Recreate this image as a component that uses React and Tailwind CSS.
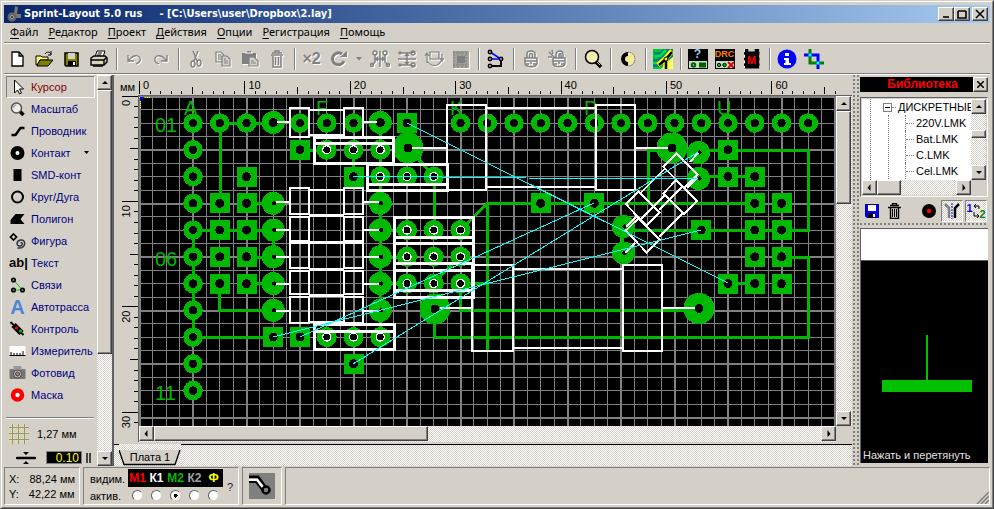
import React, { useState } from "react";

const raised = "bg-[#d4d0c8] border border-t-white border-l-white border-b-[#404040] border-r-[#404040] shadow-[inset_-1px_-1px_0_#808080]";
const track = "bg-[repeating-conic-gradient(#fff_0_25%,#d4d0c8_0_50%)] bg-[length:2px_2px]";
const dots = "bg-[radial-gradient(circle_at_1px_1px,#808080_1px,transparent_1px)] bg-[length:4px_4px]";
const sunken = "border border-t-[#808080] border-l-[#808080] border-b-white border-r-white";

/* ---------- scroll bars ---------- */
const arrows = { up: "M4 1 L7 4 H1 Z", down: "M1 1 H7 L4 4 Z", left: "M4 0 V7 L1 4 Z", right: "M2 0 V7 L5 4 Z" };
function ScrollButton({ dir }) {
  return (
    <button aria-label={dir} className={`flex size-[15px] shrink-0 items-center justify-center ${raised}`}>
      <svg width="8" height="7" viewBox={dir === "up" || dir === "down" ? "0 -1 8 7" : "0 0 7 7"}><path d={arrows[dir]} /></svg>
    </button>
  );
}

/* ---------- toolbar icons ---------- */
const G = "#808080";
const toolIcons = {
  new: <path d="M4 3 H11 L15 7 V17 H4 Z M11 3 V7 H15" fill="#fff" stroke="#000" strokeWidth="1.3" />,
  open: <><path d="M1 7 H6 L7 8 H13 V11 H5 L2 16 H1 Z" fill="#ff6" stroke="#000" /><path d="M5 11 H18 L13 17 H2 Z" fill="#808000" stroke="#000" /><path d="M10 5 C12 2 15 3 16 5 M16 2 V6 H13" fill="none" stroke="#000" /></>,
  save: <><path d="M3 4 H16 V17 H4 L3 16 Z" fill="#808000" stroke="#000" strokeWidth="1.5" /><path d="M6 4 H13 V10 H6 Z" fill="#d4d0c8" /><path d="M6 12 H14 V17 H6 Z" fill="#000" /><path d="M11 13 H13 V16 H11 Z" fill="#fff" /></>,
  print: <><path d="M6 8 L8 2 H16 L14 8 Z" fill="#fff" stroke="#000" /><path d="M9 4 H13 M8 6 H12" stroke="#000" /><path d="M2 9 L5 7 H16 L18 9 V13 L15 16 H2 Z" fill="#d4d0c8" stroke="#000" strokeWidth="1.4" /><path d="M2 11 H15 V16 M15 11 L18 8 M4 17 H14" fill="none" stroke="#000" strokeWidth="1.4" /><path d="M10 13 H13" stroke="#ff0" /></>,
  undo: <path d="M4 6 V12 H10 M4 12 L7 9 C9 7 14 5 16 9 C17 12 15 14 12 15" fill="none" stroke={G} strokeWidth="1.3" />,
  redo: <path d="M16 6 V12 H10 M16 12 L13 9 C11 7 6 5 4 9 C3 12 5 14 8 15" fill="none" stroke={G} strokeWidth="1.3" />,
  cut: <g fill="none" stroke={G} strokeWidth="1.4"><path d="M7 2 L11 12 M12 2 L8 12" /><ellipse cx="7" cy="15" rx="2" ry="3" /><ellipse cx="13" cy="14" rx="2" ry="3" /></g>,
  copy: <g fill="none" stroke={G} strokeWidth="1.2"><path d="M3 3 H8 L11 6 V13 H3 Z M5 6 H8 M5 8 H9 M5 10 H9" /><path d="M9 7 H14 L17 10 V17 H9 Z" fill="#d4d0c8" /><path d="M11 10 H13 M11 12 H15 M11 14 H15" /></g>,
  paste: <><path d="M2 4 H7 V2 H11 V4 H16 V15 H2 Z" fill={G} /><path d="M5 4 H13" stroke="#fff" /><path d="M9 8 H14 L18 12 V17 H9 Z M11 12 H14 M11 14 H16" fill="#d4d0c8" stroke={G} strokeWidth="1.2" /></>,
  trash: <g fill="none" stroke={G} strokeWidth="1.5"><path d="M4 6 H16 M5 4 H15 M8 4 V2 H12 V4 M6 7 V18 H14 V7 M8.500 8 V16 M11.500 8 V16" /></g>,
  rotate: <><path d="M15 12 A6 6 0 1 1 13 5" fill="none" stroke={G} strokeWidth="3" /><path d="M11 8 H18 V2 Z" fill={G} /></>,
  mirror: <g fill="none" stroke={G} strokeWidth="1.5"><path d="M10 2 V18 M2 16 L5 13 V5 M18 16 L15 13 V5 M6 10 H14 M8 8 L6 10 L8 12 M12 8 L14 10 L12 12" /><circle cx="5" cy="4" r="2" /><circle cx="15" cy="4" r="2" /><circle cx="2" cy="16" r="1.500" /><circle cx="18" cy="16" r="1.500" /></g>,
  flip: <g fill="none" stroke={G} strokeWidth="1.5"><path d="M1 10 H19 M4 4 H14 L17 3 M4 16 H14 L17 17 M10 5 V15 M8 7 L10 5 L12 7 M8 13 L10 15 L12 13" /><circle cx="16" cy="4" r="2" /><circle cx="16" cy="16" r="2" /><circle cx="3" cy="4" r="1" /><circle cx="3" cy="16" r="1" /></g>,
  align: <g fill="none" stroke={G} strokeWidth="1.2"><path d="M6 3 H15 V10 H6 Z M3 14 V5 M1 7 L3 4 L5 7 M3 12 C7 18 14 18 17 12 M18 5 V11 M16 9 L18 12 L20 9" /></g>,
  pattern: <><rect x="2" y="2" width="16" height="17" fill="#a5a29c" /><path d="M3 2 V19 M7 2 V19 M11 2 V19 M15 2 V19 M2 4 H18 M2 16 H18" stroke={G} strokeDasharray="2 1" /><rect x="6" y="7" width="8" height="7" fill={G} /></>,
  nodes: <><path d="M4 3 L15 10 H4" fill="none" stroke="#00f" strokeWidth="1.5" /><path d="M15 9 V17 H4" fill="none" stroke="#000" strokeWidth="2" /><circle cx="4" cy="3" r="1.700" fill="#aaa" stroke="#000" strokeWidth="1.500" /><circle cx="4" cy="10" r="1.700" fill="#aaa" stroke="#000" strokeWidth="1.500" /><circle cx="4" cy="17" r="1.700" fill="#aaa" stroke="#000" strokeWidth="1.500" /><circle cx="15" cy="10" r="1.700" fill="#aaa" stroke="#000" strokeWidth="1.500" /></>,
  lock: <g fill="none" stroke={G} strokeWidth="1.500"><path d="M6 9 V5 C6 1 14 1 14 5 V9 M8.500 9 V6 C8.500 4 11.500 4 11.500 6 V9" /><path d="M4 9 H16 V14 C16 19 4 19 4 14 Z M4 12 H9 M11 12 H16 M5 15 H8 M12 15 H15 M10 11 V15" /></g>,
  unlock: <g fill="none" stroke={G} strokeWidth="1.500"><path d="M8 9 V5 C9 1 15 1 15 5 V9 M11 9 V6 C11 4 13 4 13 6 V9" /><path d="M5 9 H17 V14 C17 19 5 19 5 14 Z M5 12 H10 M12 12 H17 M6 15 H9 M13 15 H16 M11 11 V15 M1 3 L7 9 M4 1 L5 5 M0 8 H4" /></g>,
  magnifier: <><path d="M13 13 L18 18" stroke="#000" strokeWidth="3.500" /><path d="M14 13 L17 16" stroke="#cc8" strokeWidth="1" /><circle cx="9" cy="8" r="6.500" fill="#f2edb0" stroke="#000" strokeWidth="1.500" /></>,
  contrast: <><circle cx="10" cy="10" r="7" fill="#000" /><path d="M10 3 A7 7 0 0 1 10 17 V13 A3 3 0 0 1 10 7 Z" fill="#f4ec9a" /><path d="M10 3 A7 7 0 0 1 10 17" fill="none" stroke="#777" strokeDasharray="1 1" /></>,
  board: <><rect x="0" y="0" width="10" height="20" fill="#00c832" /><path d="M0 3 H7 L10 0 H20 V8 L8 18 H0 V10 H5" fill="#008080" /><path d="M2 7 H7 L13 1 M0 14 H5" fill="none" stroke="#00e040" strokeWidth="2.500" /><path d="M8 20 L20 8 V20 Z" fill="#ff6" /><path d="M19 2 L12 10 L5 16 M13 10 V20" fill="none" stroke="#ff0" strokeWidth="5" /><path d="M19 3 L13 10 L6 16 M13 10 V20" fill="none" stroke="#000" strokeWidth="2.500" /><circle cx="13" cy="10" r="2" fill="#ff0" stroke="#000" /></>,
  info: <><circle cx="10" cy="10" r="9.500" fill="#00f" /><path d="M8 4 H12 V7 H8 Z M7 9 H12 V14 H14 V16 H7 V14 H8.500 V11 H7 Z" fill="#fff" /></>,
  crop: <g fill="none"><path d="M6 0 V14 H20" stroke="#008000" strokeWidth="3" /><path d="M0 6 H14 V20" stroke="#00f" strokeWidth="3" /><path d="M4.500 4.500 H7.500 V7.500 H4.500 Z M12.500 12.500 H15.500 V15.500 H12.500 Z" fill="#0ff" /></g>,
};
const toolGroups = [
  ["new", "open", "save", "print"],
  ["-undo", "-redo"],
  ["-cut", "-copy", "-paste", "-trash"],
  ["x2", "-rotate", "caret", "-mirror", "-flip", "-align", "-pattern"],
  ["nodes"],
  ["-lock", "-unlock"],
  ["magnifier"],
  ["contrast"],
  ["board"],
  ["help", "drc", "mask"],
  ["info", "crop"],
];

function ToolIcon({ name }) {
  if (name === "x2") return <span className="text-[16px] font-bold text-[#808080] [text-shadow:1px_1px_0_#fff]">×2</span>;
  if (name === "help")
    return (
      <span className="flex h-5 w-5 flex-col bg-black text-center text-[12px] leading-[11px] font-bold text-[#a6caf0]">
        ?<svg className="mt-auto border border-black bg-[#c0e0c0]" width="20" height="9"><circle cx="4.500" cy="4" r="1.700" fill="none" stroke="#006000" strokeWidth="2" /><rect x="10" y="1.500" width="7" height="5" fill="#006000" /></svg>
      </span>
    );
  if (name === "drc")
    return (
      <span className="flex h-5 w-5 flex-col bg-black text-center text-[9px] leading-[11px] font-bold text-[#ff8000]">
        DRC<svg className="mt-auto border border-black bg-[#c0e0c0]" width="20" height="9"><circle cx="3" cy="4" r="1.700" fill="#00c000" stroke="#000" /><circle cx="8.500" cy="4" r="1.700" fill="#00c000" stroke="#000" /><path d="M12 1 L18 7 M18 1 L12 7" stroke="#e00000" strokeWidth="2" /></svg>
      </span>
    );
  if (name === "mask")
    return <span className="h-5 w-4 border-x border-dashed border-white bg-black pt-1 text-center text-[11px] leading-[15px] font-bold text-[#ff0000] [clip-path:polygon(0_0,30%_0,30%_15%,70%_15%,70%_0,100%_0,100%_100%,0_100%)]">M</span>;
  return <svg width="20" height="20" viewBox="0 0 20 20">{toolIcons[name]}</svg>;
}

function Toolbar() {
  return (
    <div className="flex h-[31px] shrink-0 items-center border-t border-b border-t-white border-b-[#808080]">
      {toolGroups.map((group, g) => (
        <div key={g} className="flex items-center">
          {g > 0 && <div className="mr-[3px] ml-1 h-[22px] w-px border-l border-l-[#808080] shadow-[1px_0_0_#fff]" />}
          {group.map((raw) => {
            const off = raw[0] === "-";
            const name = off ? raw.slice(1) : raw;
            if (name === "caret")
              return <button key={raw} aria-label="rotate options" className="flex w-[14px] justify-center"><svg width="6" height="4"><path d="M0 0 H6 L3 3.500 Z" fill={G} /></svg></button>;
            return (
              <button key={raw} aria-label={name} className={`flex h-7 w-[27px] items-center justify-center ${off ? "drop-shadow-[1px_1px_0_#fff]" : ""}`}>
                <ToolIcon name={name} />
              </button>
            );
          })}
        </div>
      ))}
    </div>
  );
}

/* ---------- side tools ---------- */
const sideTools = [
  ["Курсор", <path d="M5 1 V14 L8 11 L10 15 L12 14 L10 10 H14 Z" fill="#fff" stroke="#000" />],
  ["Масштаб", <><path d="M10 10 L14 14" stroke="#000" strokeWidth="3.500" /><circle cx="7" cy="7" r="5" fill="#eee" stroke="#555" strokeWidth="1.500" /><path d="M4 7 A3 3 0 0 1 7 4" fill="none" stroke="#aaa" strokeWidth="1.500" /></>],
  ["Проводник", <path d="M2 12 H6 L11 5 H15" fill="none" stroke="#000" strokeWidth="2.500" />],
  ["Контакт", <circle cx="8" cy="8" r="4.500" fill="#fff" stroke="#000" strokeWidth="5" />],
  ["SMD-конт", <rect x="4" y="2" width="8" height="12" />],
  ["Круг/Дуга", <circle cx="8" cy="8" r="5.500" fill="none" stroke="#000" strokeWidth="2" />],
  ["Полигон", <path d="M1 13 V9 L6 3 H15 L11 8 L15 13 Z" />],
  ["Фигура", <><path d="M4 1 L7 4 L4 7 L1 4 Z" fill="none" stroke="#000" strokeWidth="1.700" /><path d="M8 15 C17 16 17 6 11 7 C6 8 7 14 11 13 C14 12 13 9 11 10" fill="none" stroke="#334" strokeWidth="1.500" /></>],
  ["Текст", null],
  ["Связи", <><path d="M13 13 H4 M4 3 L13 13" fill="none" stroke="#0c0" /><circle cx="4" cy="3" r="1.800" stroke="#000" strokeWidth="1.500" fill="#777" /><circle cx="4" cy="13" r="1.800" stroke="#000" strokeWidth="1.500" fill="#777" /><circle cx="13" cy="13" r="1.800" stroke="#000" strokeWidth="1.500" fill="#777" /></>],
  ["Автотрасса", null],
  ["Контроль", <><path d="M1 1 L14 14" stroke="#000" strokeWidth="2" /><path d="M4 4 L12 12" stroke="#000" strokeWidth="6" /><circle cx="7" cy="7" r="1.500" fill="red" /><circle cx="11" cy="10" r="1.500" fill="#0c0" /></>],
  ["Измеритель", <><rect x="0" y="3" width="16" height="10" fill="#fff" /><path d="M0 12.500 H16 M1.500 9 V13 M4.500 10 V13 M7.500 10 V13 M10.500 10 V13 M13.500 8 V13" stroke="#000" /></>],
  ["Фотовид", <><rect x="0" y="4" width="16" height="10" rx="1" fill="#777" /><rect x="4" y="1" width="8" height="4" fill="#999" /><circle cx="8" cy="9" r="4" fill="#ccc" stroke="#444" /><circle cx="8" cy="9" r="2" fill="#b8845a" stroke="#334" /></>],
  ["Маска", <><circle cx="8" cy="8" r="4.500" fill="#fff" stroke="#f00" strokeWidth="4.500" /></>],
];

function SideTools() {
  return (
    <aside className="flex w-[108px] shrink-0 border-r-2 border-r-[#606060]">
      <div className="min-w-0 flex-1 overflow-hidden pt-px">
        {sideTools.map(([label, icon], i) => (
          <button key={label} className={`flex h-[22px] w-[89px] items-center gap-[5px] border pl-0.5 text-left text-[11px] whitespace-nowrap ${i === 0 ? "border-t-[#808080] border-l-[#808080] border-r-white border-b-white text-[#800000]" : "border-transparent text-[#000080]"}`}>
            {label === "Текст" ? <span className="w-[17px] text-[13px] font-bold text-black">ab|</span>
              : label === "Автотрасса" ? <span className="w-[17px] text-center text-[20px] leading-4 font-bold text-[#4a86d8]">A</span>
              : <svg className="shrink-0" width="17" height="16" viewBox="0 0 16 16">{icon}</svg>}
            <span>{label}</span>
            {label === "Контакт" && <svg className="ml-2" width="6" height="4"><path d="M0 0 H5 L2.500 3 Z" /></svg>}
          </button>
        ))}
        <div className="mt-[11px] mr-[3px] border-t border-t-[#808080] shadow-[0_1px_0_#fff]" />
        <div className="mt-1.5 flex h-5 items-center gap-2 pl-[3px] text-[11px]">
          <svg width="20" height="20"><path d="M3.500 0 V20 M9.500 0 V20 M15.500 0 V20 M0 3.500 H20 M0 9.500 H20 M0 15.500 H20" stroke="#eded70" strokeWidth="3" strokeDasharray="1 1" /><path d="M3.500 0 V20 M9.500 0 V20 M15.500 0 V20 M0 3.500 H20 M0 9.500 H20 M0 15.500 H20" stroke="#909090" /></svg>
          1,27 мм
        </div>
        <div className="mt-[7px] flex h-[13px] items-start pl-2.5">
          <svg width="20" height="13"><path d="M1 7 H19" stroke="#000" strokeWidth="2.500" strokeLinecap="round" /><path d="M7 1 H13 L10 4 Z M10 10 L13 13 H7 Z" /></svg>
          <input aria-label="track width" defaultValue="0.10" className="ml-2.5 h-[13px] w-9 border border-[#808080] bg-black pr-0.5 text-right text-[12px] leading-[11px] text-[#ffff00]" />
          <svg className="ml-1" width="6" height="13"><path d="M1 2 V12 M4 2 V12" stroke="#444" strokeWidth="2" /></svg>
        </div>
      </div>
      <div className={`flex w-[15px] flex-col ${track}`}>
        <ScrollButton dir="up" />
        <div className={`h-[264px] ${raised}`} />
        <div className="flex-1" />
        <ScrollButton dir="down" />
      </div>
    </aside>
  );
}

/* ---------- rulers ---------- */
const MM = 10.54;
const mmTicks = (n) => Array.from({ length: n + 1 }, (_, i) => i);
function TopRuler() {
  return (
    <svg className="h-5 min-w-0 flex-1 overflow-hidden" shapeRendering="crispEdges">
      {mmTicks(66).map((i) => {
        const x = 0.5 + i * MM, y = i % 10 === 0 ? 6 : i % 5 === 0 ? 12 : 16;
        return <path key={i} d={`M${x} ${y} V19`} stroke="#000" />;
      })}
      {mmTicks(66).filter((i) => i % 10 === 0).map((i) => <text key={i} x={4 + i * MM} y="14" fontSize="11">{i}</text>)}
    </svg>
  );
}
function LeftRuler() {
  return (
    <svg className="h-full w-6 shrink-0 overflow-hidden" shapeRendering="crispEdges">
      {mmTicks(31).map((i) => {
        const y = 1 + i * MM, x = i % 10 === 0 ? 8 : i % 5 === 0 ? 16 : 20;
        return <path key={i} d={`M${x} ${y} H24`} stroke="#000" />;
      })}
      {mmTicks(31).filter((i) => i % 10 === 0).map((i) => (
        <text key={i} transform={`translate(16 ${3 + i * MM + (i ? 14 : 8)}) rotate(-90)`} fontSize="11">{i}</text>
      ))}
    </svg>
  );
}

/* ---------- circuit board ---------- */
const P = 26.75;
const cx = (c) => 139.5 + P * c;
const cy = (r) => 96.3 + P * r;
const GREEN = "#00b800";
const range = (a, b) => Array.from({ length: b - a + 1 }, (_, i) => a + i);

const ringPads = [...range(1, 11).map((r) => [2, r]), ...[3, 4, 6, 7, 8].map((c) => [c, 1]), ...range(12, 25).map((c) => [c, 1])];
const squarePads = [[10, 1], [6, 2], [4, 3], [8, 3], [3, 4], [4, 4], [3, 5], [4, 5], [3, 6], [4, 6], [3, 7], [4, 7], [5, 9], [6, 9], [8, 10], [15, 4], [17, 4], [22, 2], [22, 3], [23, 3], [23, 4], [24, 4], [21, 5], [23, 5], [24, 5], [23, 6], [24, 6], [22, 7], [23, 7], [24, 7]];
const headerPads = [[7, 2], [8, 2], [9, 2], [9, 3], [10, 3], [11, 3], ...[5, 6, 7].flatMap((r) => [[10, r], [11, r], [12, r]]), [7, 9], [8, 9], [9, 9]];
const resistorPads = [...range(4, 8).flatMap((r) => [[cx(5), cy(r)], [cx(9), cy(r)]]), [698.5, 152.5], [698.5, 178.5], [623.5, 226.5], [623.5, 253]];
const bigPads = [[408, 148], [672, 148], [435, 309], [699, 308.5]];
const traces = [
  "M220 123 H273 M220 123 V203 M246 203.500 H273 M193 230.500 H273 M246 257.500 H273 M246 283.500 H273",
  "M219.500 283 V310.500 H273 M193.500 230 V337.500 H273 M273.500 230 V257 M380.500 123 V337 M300 150 H326 M353.500 150 V176",
  "M434.500 176 V230 M408 148 L434 176 M460 230 L487.500 203.500 H755 M487.500 203 V350 M380 230.500 H407 M380 257.500 H407 M380 283.500 H407",
  "M460 257 L433 283 M460 283.500 H487 M460.500 283 V310.500 H699 M434.500 309 V337.500 H808.500 V257.500 H782",
  "M698 150.500 H808.500 V230.500 H624 M648.500 203 V150.500 H672 M698 176.500 H755 M674 123 V148 M728 283.500 H755 M622 227 V253",
];
const resistorRows = [[188, 214], [217, 241], [243, 268], [271, 294], [297, 323]];
const diagonal = "M676.300 153.300 L697.300 174.300 L684 187.700 L663.300 166.700 Z M638.300 191.700 L659.300 212.700 L646.700 225.700 L625.700 204 Z M665 168.500 L640 193.500 M683 186 L659 210";
const labels = [["A", 184, 115], ["F", 316, 115], ["K", 450, 115], ["P", 584, 115], ["U", 717, 115], ["01", 155, 132], ["06", 155, 266], ["11", 155, 400]];

function Board() {
  return (
    <svg className="block min-h-0 min-w-0 flex-1 bg-black" shapeRendering="crispEdges">
      <g transform="translate(-139 -96)">
        {range(0, 150).map((i) => <path key={`v${i}`} d={`M${139.5 + (P / 2) * i} 96 V1600`} stroke={G} strokeWidth={i % 4 === 0 ? 2 : 1} />)}
        {range(0, 110).map((i) => <path key={`h${i}`} d={`M139 ${96.5 + (P / 2) * i} H2200`} stroke={G} strokeWidth={i % 4 === 0 ? 2 : 1} />)}
        {labels.map(([t, x, y]) => <text key={t} x={x} y={y} fontSize="20" fill={GREEN} fontFamily="Liberation Sans, sans-serif">{t}</text>)}
        <path d={traces.join(" ")} fill="none" stroke={GREEN} strokeWidth="3" />
        {ringPads.map(([c, r]) => <circle key={`${c}-${r}`} cx={cx(c)} cy={cy(r)} r="7" fill="#000" stroke={GREEN} strokeWidth="5.500" />)}
        {[5, 9].map((c) => <circle key={c} cx={cx(c)} cy="122.500" r="8" fill="#000" stroke={GREEN} strokeWidth="7" />)}
        {squarePads.map(([c, r]) => (
          <g key={`${c}-${r}`}><rect x={Math.round(cx(c)) - 10} y={Math.round(cy(r)) - 10} width="20" height="20" fill={GREEN} /><circle cx={cx(c)} cy={cy(r)} r="4.500" /></g>
        ))}
        {resistorPads.map(([x, y]) => <g key={`${x}-${y}`}><circle cx={x} cy={y} r="11.500" fill={GREEN} /><circle cx={x + 1} cy={y} r="2.200" /></g>)}
        {bigPads.map(([x, y]) => <g key={x}><circle cx={x} cy={y} r="15.500" fill={GREEN} /><circle cx={x} cy={y} r="4.500" /></g>)}
        {headerPads.map(([c, r]) => (
          <g key={`${c}-${r}`}><circle cx={cx(c)} cy={cy(r)} r="10" fill={GREEN} /><circle cx={cx(c)} cy={cy(r)} r="4" stroke="#fff" strokeWidth="1.300" /></g>
        ))}
        <g fill="none" stroke="#fff" strokeWidth="2">
          <path d="M290 108 H309 V137 H290 Z M344 108 H363 V137 H344 Z M309 110 H344 M309 135 H344 M277 122 H290 M363 122 H377" />
          {resistorRows.map(([a, b]) => <path key={a} d={`M290 ${a} H309 V${b} H290 Z M344 ${a} H363 V${b} H344 Z M276 ${(a + b) / 2 + 1} H290 M363 ${(a + b) / 2 + 1} H379`} />)}
          <path d="M309 190 H344 M309 322 H344" />
          <path d="M309 215.500 H344 M309 242.500 H344 M309 269.500 H344 M309 295.500 H344" strokeWidth="3" />
          <path d="M314 137.500 H393 V163.500 H314 Z M367 164.500 H447 V190.500 H367 Z M394 217.500 H473 V297.500 H394 Z M314 324.500 H394 V349.500 H314 Z M314 143.500 H393 M367 184 H447 M394 237 H473 M394 243.500 H473 M394 263.500 H473 M394 270.500 H473 M394 290.500 H473 M314 331 H394" strokeWidth="3" />
          <path d="M447 105 H486 V190 H447 Z M596 105 H635 V190 H596 Z M486 108 H596 M486 187 H596 M412 148 H447 M636 148 H668" />
          <path d="M472 265 H513 V351 H472 Z M623 265 H662 V351 H623 Z M513 269 H623 M513 348 H623 M440 308 H472 M663 308 H695" />
          <path d={diagonal} />
          <path d={diagonal} transform="translate(0 26.700)" />
          <path d="M690 162 L698 153 M687 188 L697 178 M626 227 L636 217 M625 253 L635 243" />
        </g>
        <path d="M407 123 L728 283 M353 176.500 H400 L526 178 L698 179 M273 337 L701 230 M300 337 L594 203 M353 364 L698 152" fill="none" stroke="#00ffff" />
        <path d="M139 97.500 H151 M140.500 97 V109" stroke="#ff0" strokeDasharray="1 1" />
        <path d="M140 97 H144 L140 101 Z" fill="#00f" />
      </g>
    </svg>
  );
}

function Workspace() {
  return (
    <main className="flex min-w-0 flex-1 flex-col">
      <div className="flex h-5 shrink-0">
        <div className="w-[25px] shrink-0 pt-1 pl-1.5 text-[11px] leading-4">мм</div>
        <TopRuler />
      </div>
      <div className="flex min-h-0 flex-1">
        <LeftRuler />
        <div className="flex min-w-0 flex-1 flex-col border-t border-l border-[#606060]">
          <div className="flex min-h-0 flex-1">
            <Board />
            <div className={`flex w-4 shrink-0 flex-col ${track}`}>
              <ScrollButton dir="up" />
              <div className={`h-[93px] w-[15px] ${raised}`} />
              <div className="flex-1" />
              <ScrollButton dir="down" />
            </div>
          </div>
          <div className="flex h-4 shrink-0">
            <div className={`flex min-w-0 flex-1 ${track}`}>
              <ScrollButton dir="left" />
              <div className={`h-[15px] w-[274px] ${raised}`} />
              <div className="flex-1" />
              <ScrollButton dir="right" />
            </div>
            <div className="w-4" />
          </div>
        </div>
      </div>
      <div className="mt-0.5 flex h-[22px] shrink-0 items-start">
        <div className={`h-full w-[5px] border-t border-black ${track}`} />
        <div className={`h-full ${track}`}>
          <button className="relative h-[15px] w-[62px] text-[11px] leading-[15px]">
            <svg className="absolute inset-0" width="62" height="16"><path d="M0 0 L5 14.500 H56 L61 0" fill="#d4d0c8" stroke="#000" strokeWidth="1.300" /></svg>
            <span className="relative">Плата 1</span>
          </button>
        </div>
        <div className={`h-full flex-1 border-t border-black ${track}`} />
      </div>
    </main>
  );
}

/* ---------- library panel ---------- */
const parts = ["220V.LMK", "Bat.LMK", "C.LMK", "Cel.LMK"];
function Library() {
  return (
    <aside className="flex w-[130px] shrink-0 flex-col pr-0.5 pb-[3px]">
      <div className="mt-0.5 flex h-[15px] shrink-0 bg-black">
        <h2 className="flex-1 pl-3 text-center text-[12px] leading-[15px] font-bold text-[#ff0000]">Библиотека</h2>
        <button aria-label="close" className={`flex w-[15px] items-center justify-center ${raised}`}><svg width="7" height="7"><path d="M0 0 L7 7 M7 0 L0 7" stroke="#000" strokeWidth="1.500" /></svg></button>
      </div>
      <div className="mt-[5px] h-[100px] shrink-0 border border-t-[#606060] border-l-[#606060] border-r-white border-b-white p-px">
        <div className="flex h-[81px]">
          <div className="min-w-0 flex-1 overflow-hidden bg-white pl-2 text-[11px] leading-4 whitespace-nowrap">
            <div className="h-full border-l border-dotted border-[#808080] pl-[17px]">
              <div className="-ml-[5px] flex h-4 items-center">
                <button aria-label="collapse" className="flex size-[9px] shrink-0 items-center justify-center border border-[#808080]"><span className="h-px w-[5px] bg-black" /></button>
                <span className="mr-0.5 w-1 shrink-0 border-t border-dotted border-[#808080]" />ДИСКРЕТНЫЕ
              </div>
              <div className="h-20 border-l border-dotted border-[#808080] pl-4">
                {parts.map((p) => (
                  <div key={p} className="flex h-4 items-center gap-0.5 border-l border-dotted border-[#808080]">
                    <span className="w-2 border-t border-dotted border-[#808080]" />{p}
                  </div>
                ))}
              </div>
            </div>
          </div>
          <div className={`flex w-[15px] flex-col ${track}`}>
            <ScrollButton dir="up" />
            <div className="flex-1" />
            <div className={`h-2 ${raised}`} />
            <div className="h-[27px]" />
            <ScrollButton dir="down" />
          </div>
        </div>
        <div className="flex h-[15px]">
          <div className={`flex flex-1 ${track}`}>
            <ScrollButton dir="left" /><div className={`w-6 ${raised}`} /><div className="flex-1" /><ScrollButton dir="right" />
          </div>
          <div className="w-[15px]" />
        </div>
      </div>
      <div className="mt-0.5 flex h-[23px] shrink-0 items-center">
        <button aria-label="save part" className="ml-[5px]"><svg width="14" height="14"><path d="M0 0 H14 V14 H2 L0 12 Z" fill="#00f" /><path d="M0.500 0.500 H13.500 V13.500 H2 L0.500 12 Z" fill="none" stroke="#000080" /><path d="M3 1 H11 V7 H3 Z M8 10 H10 V13 H8 Z" fill="#fff" /><path d="M3 9 H8 V14 H3 Z" fill="#000" /></svg></button>
        <button aria-label="delete part" className="ml-2"><svg width="15" height="16" fill="none" stroke="#000"><path d="M1 4.500 H14 M3 2.500 H12 M5.500 2 V0.500 H9.500 V2 M3.500 5 V15.500 H11.500 V5" fill="#d4d0c8" strokeWidth="1.400" /><path d="M5.500 6 V14 M7.500 6 V14 M9.500 6 V14" /></svg></button>
        <button aria-label="record" className="ml-5"><svg width="14" height="14"><circle cx="7" cy="7" r="7" /><circle cx="7" cy="7" r="2.200" fill="red" /></svg></button>
        <button aria-label="mirror part" className={`ml-[5px] flex h-[22px] w-[22px] items-center justify-center ${sunken} ${track}`}><svg width="16" height="16" fill="none" strokeWidth="2.500"><path d="M1 1 L5 5 V15" stroke="#808080" /><path d="M15 1 L11 5 V15" stroke="#000" /><path d="M8 0 V16" stroke="#00f" strokeWidth="1" strokeDasharray="2 1" /></svg></button>
        <button aria-label="swap sides" className={`ml-0.5 flex h-[22px] w-[22px] items-center justify-center text-[11px] leading-3 font-bold ${sunken} ${track}`}>
          <span className="mb-1.5 text-[#0000ff]">1</span><svg width="7" height="16" fill="none" stroke="#000"><path d="M6 6 V3 H1 M3 1 L1 3 L3 5 M1 9 V13 H6 M4 11 L6 13 L4 15" /></svg><span className="mt-1.5 text-[#008000]">2</span>
        </button>
      </div>
      <div className={`my-px h-1 shrink-0 ${dots}`} />
      <div className="h-8 shrink-0 border-t border-l border-[#606060] bg-white" />
      <div className="flex min-h-0 flex-1 flex-col border-t border-l border-[#606060] bg-black">
        <div className="flex flex-1 flex-col items-center justify-end pb-[60px] pl-1">
          <svg width="90" height="58" shapeRendering="crispEdges"><path d="M44 0 H46 V45 H90 V57 H0 V45 H44 Z" fill="#00c000" /></svg>
        </div>
        <p className="-mt-1 h-3.5 pl-0.5 text-[11px] leading-[12px] whitespace-nowrap text-[#e0e0e0]">Нажать и перетянуть</p>
      </div>
    </aside>
  );
}

/* ---------- status bar ---------- */
const layers = [["М1", "text-[#ff0000]"], ["К1", "text-white"], ["М2", "text-[#00b800]"], ["К2", "text-[#a0a0a0]"], ["Ф", "text-[#ffff00]"]];
function StatusBar() {
  const [active, setActive] = useState("М2");
  return (
    <footer className="mt-px flex h-[38px] shrink-0 gap-[3px] text-[11px]">
      <div className={`w-[76px] pt-1 pl-1 leading-[15px] ${sunken}`}>
        <div className="flex gap-2.5"><span>X:</span>88,24 мм</div>
        <div className="flex gap-2.5"><span>Y:</span>42,22 мм</div>
      </div>
      <div className={`flex w-[156px] items-start pt-px ${sunken}`}>
        <div className="w-[44px] pt-0.5 pl-1.5 leading-[17px]"><div>видим.</div><div>актив.</div></div>
        <div className="flex bg-[linear-gradient(#000_0_18px,transparent_18px)]">
          {layers.map(([name, color]) => (
            <div key={name} className="flex w-[19px] flex-col items-center">
              <label htmlFor={name} className={`h-[18px] text-[12px] leading-[18px] font-bold ${color}`}>{name}</label>
              <input id={name} type="radio" name="layer" checked={active === name} onChange={() => setActive(name)}
                className="mt-[3px] size-[11px] appearance-none rounded-full border border-t-[#606060] border-l-[#606060] border-r-[#d4d0c8] border-b-[#d4d0c8] bg-white checked:bg-[radial-gradient(circle,#000_2px,#fff_2px)]" />
            </div>
          ))}
        </div>
        <button className="mt-2.5 ml-1 text-[#202040]">?</button>
      </div>
      <div className={`flex w-[40px] items-center justify-center ${sunken}`}>
        <button aria-label="track mode"><svg width="26" height="26"><rect width="26" height="26" fill={G} /><path d="M0 4 H9 L17 15" fill="none" stroke="#000" strokeWidth="3" /><path d="M0 7 H8 L15 16" fill="none" stroke="#fff" strokeWidth="3" /><path d="M0 9 H7 L14 18" fill="none" stroke="#000" strokeWidth="2" /><circle cx="17" cy="17" r="3.500" fill={G} stroke="#000" strokeWidth="2.500" /></svg></button>
      </div>
      <div className={`flex flex-1 items-end justify-end ${sunken}`}>
        <svg width="13" height="13"><path d="M1 13 L13 1 M5 13 L13 5 M9 13 L13 9" stroke="#808080" strokeWidth="1.500" /></svg>
      </div>
    </footer>
  );
}

const menu = ["Файл", "Редактор", "Проект", "Действия", "Опции", "Регистрация", "Помощь"];
const caption = [["minimize", "M2 8 H8", ""], ["maximize", "M1 2 H9 M1 2 V9 H9 V2", ""], ["close window", "M1 1 L9 9 M9 1 L1 9", "ml-0.5"]];

export default function App() {
  return (
    <div className="flex h-screen flex-col overflow-hidden border border-t-[#d4d0c8] border-l-[#d4d0c8] border-r-[#404040] border-b-[#404040] bg-[#d4d0c8] font-['Liberation_Sans',Arial,sans-serif] text-black">
      <div className="flex min-h-0 flex-1 flex-col border border-t-white border-l-white border-r-[#808080] border-b-[#808080] px-0.5 pt-[3px] pb-0.5">
        <header className="flex h-[18px] shrink-0 items-center bg-linear-to-r from-[#0a246a] to-[#a6caf0] pr-0.5 pl-[3px] text-white">
          <svg width="15" height="16"><path d="M8 0 L11 1 L10 8 L7 8 Z M8 8 H14 V12 H8 Z" fill="#777" /><circle cx="5" cy="11" r="4.500" fill="#666" /><circle cx="5" cy="11" r="1.500" fill="#222" stroke="#aaa" /></svg>
          <h1 className="ml-0.5 flex-1 font-['DejaVu_Sans_Condensed','Noto_Sans',sans-serif] text-[11px] leading-[18px] font-bold whitespace-pre">Sprint-Layout 5.0 rus     - [C:\Users\user\Dropbox\2.lay]</h1>
          {caption.map(([name, d, gap]) => (
            <button key={name} aria-label={name} className={`flex h-[14px] w-4 items-center justify-center ${raised} ${gap}`}><svg width="10" height="10"><path d={d} fill="none" stroke="#000" strokeWidth="1.600" /></svg></button>
          ))}
        </header>
        <nav className="flex h-5 shrink-0 items-center gap-2.5 border-b border-b-[#808080] pl-1.5 font-['Noto_Sans',sans-serif] text-[11px]">
          {menu.map((m) => <button key={m}><span className="underline underline-offset-2">{m[0]}</span>{m.slice(1)}</button>)}
        </nav>
        <Toolbar />
        <div className="flex min-h-0 flex-1 border-t border-t-white pl-0.5">
          <SideTools />
          <Workspace />
          <div className={`mx-px w-1.5 shrink-0 ${dots}`} />
          <Library />
        </div>
        <StatusBar />
      </div>
    </div>
  );
}
